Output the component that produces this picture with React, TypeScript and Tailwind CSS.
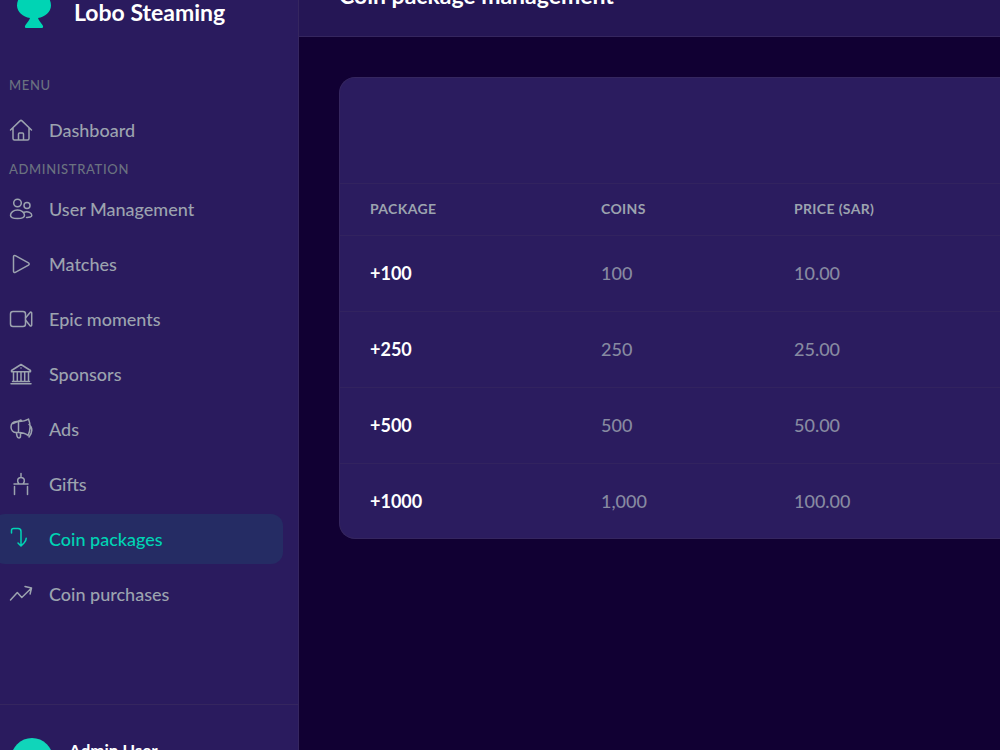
import type { ReactNode } from 'react';

type NavItem = { label: string; icon: ReactNode; active?: boolean };

const MENU: NavItem[] = [{ label: 'Dashboard', icon: <HomeIcon /> }];

const ADMINISTRATION: NavItem[] = [
  { label: 'User Management', icon: <UsersIcon /> },
  { label: 'Matches', icon: <PlayIcon /> },
  { label: 'Epic moments', icon: <VideoIcon /> },
  { label: 'Sponsors', icon: <BankIcon /> },
  { label: 'Ads', icon: <MegaphoneIcon /> },
  { label: 'Gifts', icon: <GiftIcon /> },
  { label: 'Coin packages', icon: <CoinIcon />, active: true },
  { label: 'Coin purchases', icon: <TrendIcon /> },
];

const PACKAGES = [
  { name: '+100', coins: 100, price: 10 },
  { name: '+250', coins: 250, price: 25 },
  { name: '+500', coins: 500, price: 50 },
  { name: '+1000', coins: 1000, price: 100 },
];

export default function App() {
  return (
    <div className="h-screen overflow-hidden bg-[#110033] font-[Lato,'Liberation_Sans',sans-serif] text-white">
      <div className="-mt-10 -ml-6 flex h-[calc(100vh+104px)]">
        <Sidebar />
        <main className="flex min-w-0 flex-1 flex-col">
          <header className="flex h-[77px] shrink-0 items-center border-b border-[#35265f] bg-[#251655] px-10">
            <h1 className="pb-1.5 text-[23px] leading-7 font-bold">Coin package management</h1>
          </header>
          <div className="pt-10 pl-10">
            <PackagesCard />
          </div>
        </main>
      </div>
    </div>
  );
}

function Sidebar() {
  return (
    <aside className="flex w-[323px] shrink-0 flex-col border-r border-[#35265f] bg-[#2a1b5e] pl-px">
      <div className="flex h-[117px] shrink-0 items-start gap-[23px] pt-7 pl-10">
        <LogoIcon />
        <span className="pt-2 text-[23px] leading-8 font-bold">Lobo Steaming</span>
      </div>
      <nav className="flex-1 pr-[15px] pl-4">
        <h2 className="mb-3 pl-4 text-[13px] leading-4 font-medium tracking-wider text-[#6b7280]">MENU</h2>
        <NavList items={MENU} />
        <h2 className="mt-1.5 mb-[7px] pl-4 text-[13px] leading-4 font-medium tracking-wider text-[#6b7280]">
          ADMINISTRATION
        </h2>
        <NavList items={ADMINISTRATION} />
      </nav>
      <div className="flex h-[110px] shrink-0 items-center gap-4 border-t border-[#35265f] pb-px pl-[34px]">
        <span className="size-[42px] rounded-full bg-[#10d5ba]" />
        <span className="mb-4 text-[17px] leading-5 font-bold">Admin User</span>
      </div>
    </aside>
  );
}

function NavList({ items }: { items: NavItem[] }) {
  return (
    <ul className="flex flex-col gap-[5px]">
      {items.map((item) => (
        <li key={item.label}>
          <a
            href="#"
            aria-current={item.active ? 'page' : undefined}
            className={
              'flex h-[50px] items-center gap-4 rounded-xl px-4 text-lg font-medium ' +
              (item.active ? 'bg-[#252c64] text-[#00d4b4]' : 'text-[#9ca3af]')
            }
          >
            {item.icon}
            {item.label}
          </a>
        </li>
      ))}
    </ul>
  );
}

function PackagesCard() {
  return (
    <section className="overflow-hidden rounded-l-2xl border border-r-0 border-[#35265f] bg-[#2b1c5f]">
      <div className="h-[106px] border-b border-[#32235f]" />
      <table className="w-full table-fixed text-left">
        <thead>
          <tr className="h-[51px] border-b border-[#32235f] text-sm tracking-wide text-[#9ca3af]">
            <th className="w-[231px] pl-[30px] font-bold">PACKAGE</th>
            <th className="w-[193px] pl-[30px] font-bold">COINS</th>
            <th className="pl-[30px] font-bold">PRICE (SAR)</th>
          </tr>
        </thead>
        <tbody>
          {PACKAGES.map((p) => (
            <tr
              key={p.name}
              className="h-[76px] border-b border-[#32235f] text-lg text-[#878aa1] last:h-[75px] last:border-b-0"
            >
              <td className="pl-[30px] font-bold text-white">{p.name}</td>
              <td className="pl-[30px] font-medium">{p.coins.toLocaleString('en-US')}</td>
              <td className="pl-[30px] font-medium">{p.price.toFixed(2)}</td>
            </tr>
          ))}
        </tbody>
      </table>
    </section>
  );
}

function LogoIcon() {
  return (
    <svg viewBox="0 0 34 42" className="h-[42px] w-[34px] shrink-0" fill="#00d4b4" aria-hidden="true">
      <path d="M17 2C26.500 2 34 9 34 17.500c0 6.500-6 11.500-13 12.500 .5 2 2.500 4 4.500 7 1.200 2 .5 3-1 3h-15c-1.500 0-2.200-1-1-3 2-3 4-5 4.500-7C6 29 0 24 0 17.500 0 9 7.500 2 17 2z" />
    </svg>
  );
}

function Icon({ children }: { children: ReactNode }) {
  return (
    <svg
      viewBox="0 0 24 24"
      className="size-6 shrink-0"
      fill="none"
      stroke="currentColor"
      strokeWidth="1.5"
      strokeLinecap="round"
      strokeLinejoin="round"
      aria-hidden="true"
    >
      {children}
    </svg>
  );
}

function HomeIcon() {
  return (
    <Icon>
      <path d="M1.500 12 11 2.900q1-1 2 0L22.500 12M4 10v10.500q0 1.500 1.500 1.500h13q1.500 0 1.500-1.500V10M9.500 22v-6q0-1 1-1h3q1 0 1 1v6" />
    </Icon>
  );
}

function UsersIcon() {
  return (
    <Icon>
      <circle cx="8.500" cy="6" r="3.800" />
      <circle cx="18" cy="8.500" r="3" />
      <path d="M8.500 13c-4 0-7 2.500-7 5.200 0 2.200 3 3.300 7 3.300s7-1.100 7-3.300c0-2.700-3-5.200-7-5.200zM15 15.300c4-1.600 7.800.6 7.800 3.200 0 1.400-2.500 2-5.300 1.900" />
    </Icon>
  );
}

function PlayIcon() {
  return (
    <Icon>
      <path d="M4.500 4.700c0-1 .9-1.600 1.800-1.100l13.200 7.300c.9.500.9 1.700 0 2.200L6.300 20.400c-.9.500-1.800-.1-1.800-1.100z" />
    </Icon>
  );
}

function VideoIcon() {
  return (
    <Icon>
      <rect x="1.500" y="4.500" width="15" height="15" rx="2.500" />
      <path d="m16.500 11 4.600-5.500c.5-.7 1.600-.3 1.600.6v12c0 .9-1.100 1.300-1.600.6L16.500 13" />
    </Icon>
  );
}

function BankIcon() {
  return (
    <Icon>
      <path d="M2 21.700h20M3.500 19.500h17M4.500 10v9.500M8.300 10v9.500M12 10v9.500M15.700 10v9.500M19.500 10v9.500M2.500 8.500 12 2.500l9.500 6v1.200h-19zM12 6v.1" />
    </Icon>
  );
}

function MegaphoneIcon() {
  return (
    <Icon>
      <path d="M9.500 4.500H7.500C4 4.500 2 7 2 10s2 5.500 5.500 5.500h2zM9.500 4.500c4 0 7-.5 10-2.500M9.500 15.500c4 0 7 1 9.500 3M19.500 2c2 5 2 11.500-.5 16.500M20 7.500c4 3 3.500 8 0 12.500M7.300 15.500 8 19c.5 2.500 3.500 2.500 3.500 0v-3.500M4 6.500 12 3" />
    </Icon>
  );
}

function GiftIcon() {
  return (
    <Icon>
      <path d="M5 12h14M5.500 14.500v8M18.500 14.500v8M12 1.500v3M10 12c-2.500-3-1.500-6.500 2-6.500s4.500 3.500 2 6.500" />
    </Icon>
  );
}

function CoinIcon() {
  return (
    <Icon>
      <path d="M2.500 6V3.500C2.500 2 3 1.500 4.500 1.500H9c2 0 3 1 3 3v14M9 16l3 3 3-3c1.400-1.500 2.200-2.800 2.200-4.800" />
    </Icon>
  );
}

function TrendIcon() {
  return (
    <Icon>
      <path d="m1.500 18 6.800-7.500 4.500 5L22.500 6M16 4.500l6.500 1.500-1.400 6" />
    </Icon>
  );
}
